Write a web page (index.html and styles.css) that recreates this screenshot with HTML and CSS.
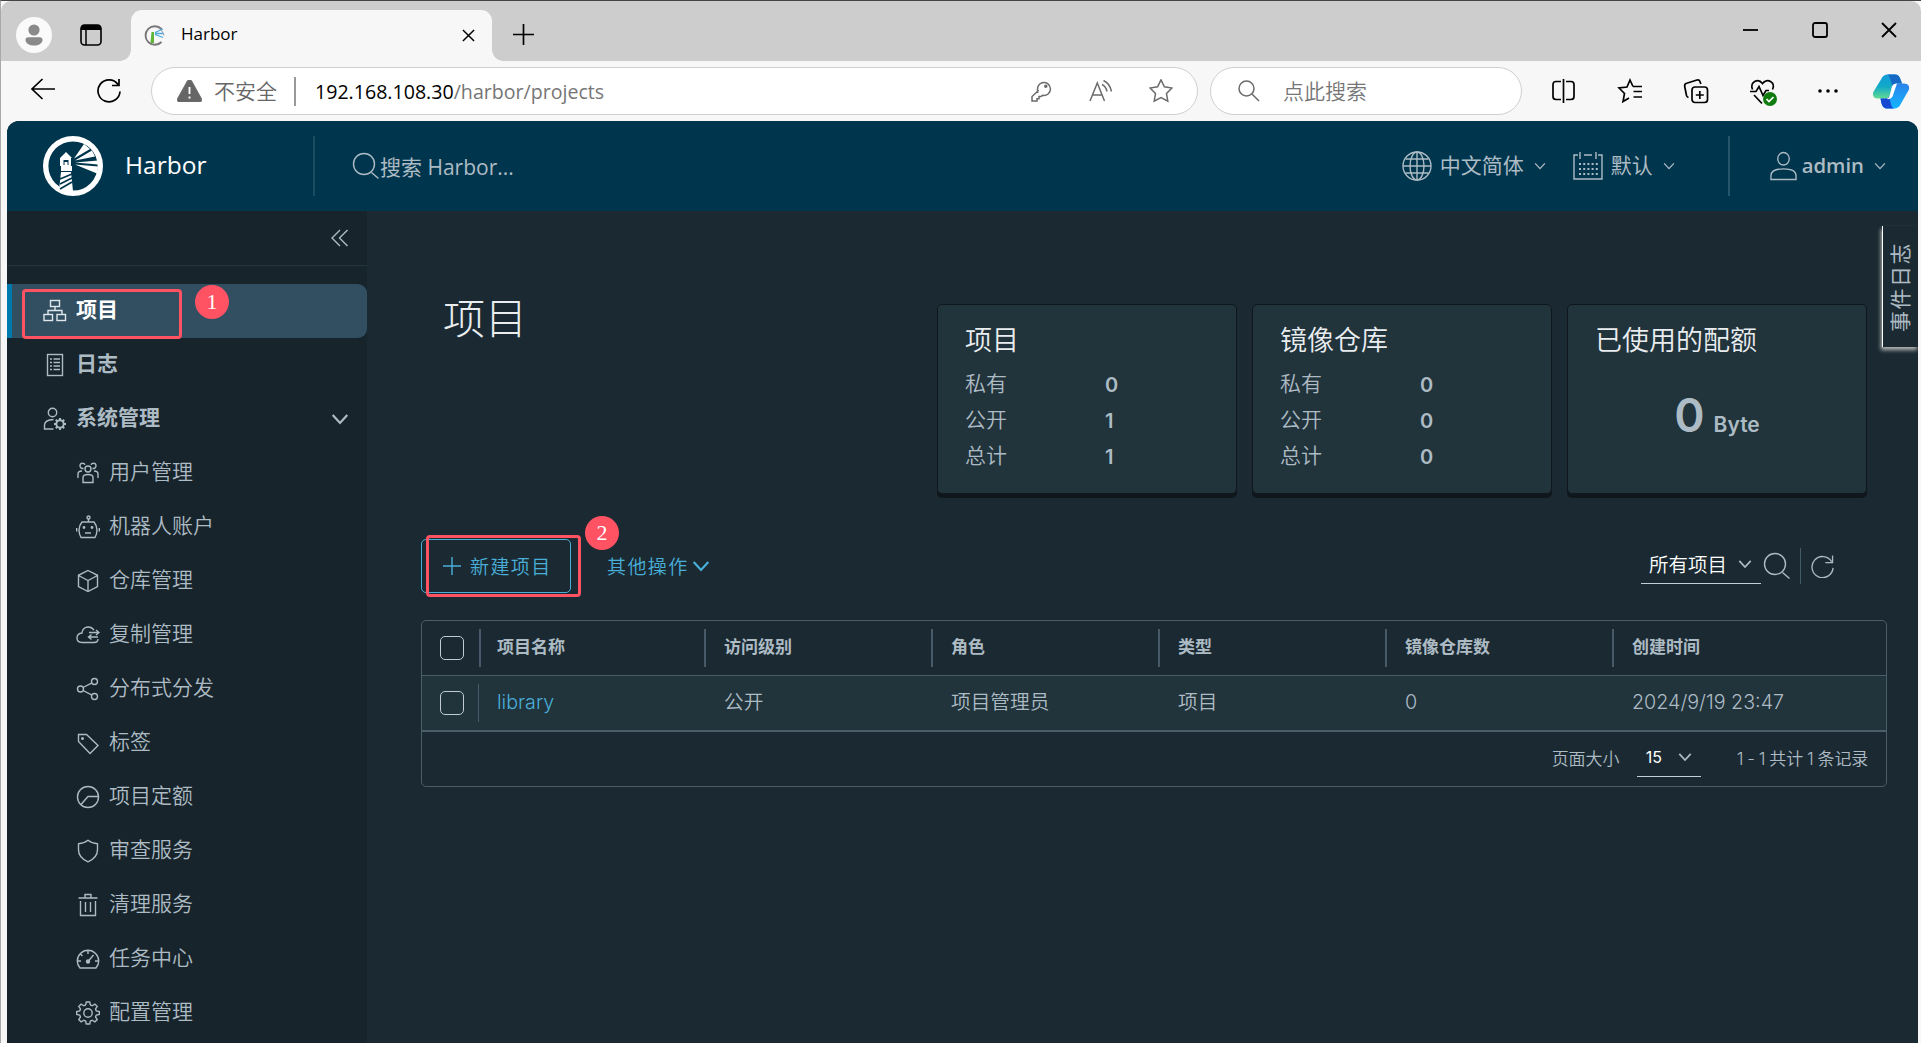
FILE: index.html
```
<!DOCTYPE html>
<html lang="zh-CN">

<head>
    <title>Harbor</title>
    <meta charset="utf-8">
    <link rel="stylesheet" href="styles.css">
</head>

<body>
    <svg class="defs" width="0" height="0">
        <symbol id="chevron" viewBox="0 0 16 16"><path d="M1.5 4.5l6.5 7 6.5-7"/></symbol>
        <symbol id="search" viewBox="0 0 28 28"><circle cx="12" cy="12" r="10.5"/><path d="M19.5 20.5l7 6"/></symbol>
        <symbol id="refresh" viewBox="0 0 24 24"><path d="M21.500 7.500A11 11 0 1 0 23 14M22.500 1v7.500h-7.500"/></symbol>
    </svg>

    <div class="titlebar">
        <svg class="avatar" viewBox="0 0 36 36"><circle cx="18" cy="18" r="18" fill="#fafafa"/><circle cx="18" cy="13" r="5.600" fill="#8a8a8a"/><path d="M9.500 23q0-2.800 2.800-2.800h11.400q2.800 0 2.800 2.800c0 3.500-4 5.600-8.500 5.600s-8.500-2.100-8.500-5.600z" fill="#8a8a8a"/></svg>
        <svg class="tabs-icon" viewBox="0 0 22 22"><rect x="1" y="1" width="20" height="20" rx="3.500" fill="none" stroke="#000" stroke-width="1.600"/><path d="M1 6V4q0-3 3-3h14q3 0 3 3v2z"/><path d="M6 6v15" stroke="#000" stroke-width="1.500"/></svg>
        <div class="tab">
            <svg class="favicon" viewBox="0 0 21 21"><path d="M17.500 4A9.300 9.300 0 1 0 17.500 17" fill="none" stroke="#777" stroke-width="1.900"/><path d="M14 2.500q5 2.500 6 8" fill="none" stroke="#999" stroke-width="1"/><path d="M7.500 7h2.500v11H6.500z" fill="#5fb336"/><path d="M11 7.500l8-3.500M11 8.500h8.500M11 9.500l8 3" stroke="#4aa8dc" stroke-width="1.300"/></svg>
            <span class="tab-title">Harbor</span>
            <svg class="tab-close" viewBox="0 0 14 14"><path d="M1 1l12 12M13 1L1 13"/></svg>
        </div>
        <svg class="new-tab" viewBox="0 0 20 20"><path d="M10 0v20M0 10h20"/></svg>
        <div class="window-buttons">
            <svg viewBox="0 0 16 16"><path d="M0 8h15"/></svg>
            <svg viewBox="0 0 16 16"><rect x="1" y="1" width="14" height="14" rx="2"/></svg>
            <svg viewBox="0 0 16 16"><path d="M1 1l14 14M15 1L1 15"/></svg>
        </div>
    </div>

    <div class="toolbar">
        <svg class="nav-back" viewBox="0 0 24 24"><path d="M24 12H1M11.500 2L1 12l10.500 10"/></svg>
        <svg class="nav-reload" viewBox="0 0 24 24"><path d="M21 5.500A11 11 0 1 0 23 12.500M22 0v6.500h-7"/></svg>
        <div class="address">
            <svg class="warn" viewBox="0 0 24 22"><path d="M10 1.500q2-3 4 0l9.500 17q1 3-2 3.500h-19q-3-.5-2-3.500z" fill="#666"/><path d="M12 7v7M12 16.500v2" stroke="#fff" stroke-width="1.900"/></svg>
            <span class="unsafe">不安全</span>
            <span class="url"><b>192.168.108.30</b>/harbor/projects</span>
            <svg viewBox="0 0 24 24"><path d="M9.500 13.500a6.500 6.500 0 1 1 4 2.800l-1.500 1.200H10v2.200H8V22H3v-4.500l6.700-6.300"/><circle cx="16.800" cy="7.200" r="1" fill="#666"/></svg>
            <svg viewBox="0 0 24 24"><path d="M1 22L8.300 4 15.500 22M3.500 16h9.500M13 5.500q4 2 5 7M14.500 1.500q6.500 3 8 11"/></svg>
            <svg viewBox="0 0 24 24"><path d="M12 .8l3.400 7 7.600 1.200-5.500 5.500 1.300 7.700L12 18.500l-6.800 3.700 1.300-7.700L1 9l7.600-1.200z"/></svg>
        </div>
        <div class="quick-search">
            <svg viewBox="0 0 22 22"><circle cx="8.500" cy="8.500" r="7.500"/><path d="M14 14l7 7"/></svg>
            <span>点此搜索</span>
        </div>
        <div class="tools">
            <svg viewBox="0 0 24 24"><path d="M9 2.500H4q-3 0-3 3v12q0 3 3 3h5M14 2.500h5q3 0 3 3v12q0 3-3 3h-5M11.500 0v24"/></svg>
            <svg viewBox="0 0 24 24"><path d="M15 7.500L12 1 9 8l-8 1 5.500 5.500L5 22.500l6-3.500M15 7.500h9M15.500 12.500H24M15.500 18H24"/></svg>
            <svg viewBox="0 0 24 24"><rect x="8" y="8" width="15.500" height="15.500" rx="3"/><path d="M15.800 12v8M11.800 16h8M4.500 18.500q-1.500-.5-2-2L.7 7.500q-.5-2.500 2-3.200L13 1q2.200-.6 3 1.500l.8 2.500"/></svg>
            <svg class="heart" viewBox="0 0 27 27"><path d="M2.500 10.500C-.5 3 8-1.500 12.500 4.500 17-1.500 26 3 22.500 10.500M0 12.500h6l3-5 4 9 3-5h3M4 16l8 8.500"/><circle cx="20" cy="20" r="7" fill="#107c10" stroke="none"/><path d="M16.500 20l2.500 2.500 4.500-4.500" stroke="#fff"/></svg>
            <svg viewBox="0 0 24 24"><g fill="#000" stroke="none"><circle cx="4" cy="12" r="1.800"/><circle cx="12" cy="12" r="1.800"/><circle cx="20" cy="12" r="1.800"/></g></svg>
            <svg class="copilot" viewBox="0 0 36 34">
                <defs>
                    <linearGradient id="cp1" x1="0" y1="0" x2="0" y2="1"><stop offset="0" stop-color="#0f9bd8"/><stop offset=".5" stop-color="#12a9c9"/><stop offset="1" stop-color="#63dc90"/></linearGradient>
                    <linearGradient id="cp2" x1="0" y1="0" x2="0" y2="1"><stop offset="0" stop-color="#2b83ea"/><stop offset="1" stop-color="#12b6ff"/></linearGradient>
                </defs>
                <path d="M8 5q2-5 7-5h7q4 0 5.500 5L29 9h-5q-4 0-5 4l-2.500 8q-1 3-4 3H5q-6 0-5-6z" fill="url(#cp1)" stroke="none"/>
                <path d="M22 0q4 0 5.500 5L29 9h-5q-3 0-4.500 2.500L17 4q-1-4-3-4z" fill="#1568c4" stroke="none"/>
                <path d="M28 29q-2 5-7 5h-7q-4 0-5.500-5L7.500 24h5q3.500 0 4.500-4l2.500-8q1-3 4-3H31q6 0 5 6z" fill="url(#cp2)" stroke="none"/>
                <path d="M14 34q-4 0-5.500-5l-1-5h5q2.500 0 3.500-2l2 8q.8 3 3 4z" fill="#1749d1" stroke="none"/>
                <path d="M19 12q1-3 5-3l-4.500 13q-1.500 3-6.500 2.500 3-.5 4-4z" fill="#fff" stroke="none"/>
            </svg>
        </div>
    </div>

    <div class="page">
        <header class="header">
            <div class="branding">
                <svg class="logo" viewBox="0 0 60 60">
                    <circle cx="30" cy="30" r="27.300" fill="none" stroke="#fff" stroke-width="5.400"/>
                    <path d="M17 22l6-6 6 6h-1v8h1v5H18v-5h-1zM18 36h10l2 19-6 3-8-4z" fill="#fff"/>
                    <path d="M20.500 24h5v5h-5z" fill="#00364d"/>
                    <path d="M21.500 26h3v3h-3z" fill="#fff"/>
                    <path d="M17 43l12-5M17 48l12-6M17 53l12-7" stroke="#00364d" stroke-width="1.700"/>
                    <path d="M31 22.500L41 8l6 5zM32 24.500l17-10 3 6zM32 26.500l23-2v4zM32 28.500l23 2-1 7z" fill="#fff"/>
                </svg>
                <span class="brand">Harbor</span>
            </div>
            <div class="global-search">
                <svg class="line"><use href="#search"/></svg>
                <span>搜索 Harbor...</span>
            </div>
            <div class="menu lang">
                <svg class="line" viewBox="0 0 30 30"><circle cx="15" cy="15" r="14"/><ellipse cx="15" cy="15" rx="7" ry="14"/><path d="M15 1v28M1 15h28M3.500 8h23M3.500 22h23"/></svg>
                <span>中文简体</span>
                <svg class="caret line"><use href="#chevron"/></svg>
            </div>
            <div class="menu mode">
                <svg class="line" viewBox="0 0 30 30"><path d="M5 4H1v24h28V4h-4M7 1v7M23 1v7M11 4h8"/><path d="M6 13h19M6 18h19M6 23h19" stroke-width="2" stroke-dasharray="2 2.200"/></svg>
                <span>默认</span>
                <svg class="caret line"><use href="#chevron"/></svg>
            </div>
            <div class="menu user">
                <svg class="line" viewBox="0 0 28 30"><ellipse cx="14" cy="7.500" rx="6" ry="6.500"/><path d="M1 29v-4q0-7 13-7t13 7v4z"/></svg>
                <span>admin</span>
                <svg class="caret line"><use href="#chevron"/></svg>
            </div>
        </header>

        <div class="body">
            <nav class="sidebar">
                <div class="collapse">
                    <svg class="line" viewBox="0 0 18 18"><path d="M9 1L1 9l8 8M16.500 1l-8 8 8 8"/></svg>
                </div>
                <a class="item active">
                    <svg class="line" viewBox="0 0 24 24"><rect x="7.500" y="1.500" width="9" height="6"/><rect x="1" y="15.500" width="8.500" height="6"/><rect x="14" y="15.500" width="8.500" height="6"/><path d="M12 7.500v4M5 15v-3.500h14V15"/></svg>
                    <span>项目</span>
                </a>
                <a class="item">
                    <svg class="line" viewBox="0 0 24 24"><rect x="4.500" y="1.500" width="15" height="21"/><path d="M7 6h2M7 9.500h2M7 13h2M7 16.500h2M10.500 6H17M10.500 9.500H17M10.500 13H17M10.500 16.500H17"/></svg>
                    <span>日志</span>
                </a>
                <a class="item">
                    <svg class="line" viewBox="0 0 24 24"><circle cx="9.500" cy="5.500" r="4.200"/><path d="M10.500 22H1.500v-4q0-5 9-5.500"/><circle cx="17" cy="17" r="3.700" stroke-width="2"/><path d="M17 11v2.500M17 20.500V23M11 17h2.500M20.500 17H23M12.800 12.800l1.700 1.700M19.500 19.500l1.700 1.700M12.800 21.200l1.700-1.700M19.500 14.500l1.700-1.700" stroke-width="2"/></svg>
                    <span>系统管理</span>
                    <svg class="expand line"><use href="#chevron"/></svg>
                </a>
                <a class="item sub">
                    <svg class="line" viewBox="0 0 24 24"><circle cx="12" cy="8" r="3"/><path d="M7 21.500v-5q0-3 5-3t5 3v5zM7.500 7.500C3 8 3 2 6.500 2.200q2 0 2.500 1.500M16.500 7.500C21 8 21 2 17.500 2.200q-2 0-2.500 1.500M2 17v-4q0-3 4-3M22 17v-4q0-3-4-3"/></svg>
                    <span>用户管理</span>
                </a>
                <a class="item sub">
                    <svg class="line" viewBox="0 0 24 24"><circle cx="12.500" cy="2.500" r="1.500"/><path d="M12.500 4v3M6 7h12q3 3.500 3 8 0 4-2 7.500H5Q3 19 3 15q0-4.500 3-8zM.7 13v3.500M23.300 13v3.500M9 18h6"/><circle cx="8" cy="12.500" r=".7"/><circle cx="16" cy="12.500" r=".7"/></svg>
                    <span>机器人账户</span>
                </a>
                <a class="item sub">
                    <svg class="line" viewBox="0 0 24 24"><path d="M12 1.500l9.500 4.800v11.200L12 22.500l-9.500-5V6.300zM2.500 6.500l9.500 5 9.500-5M12 11.500v11"/></svg>
                    <span>仓库管理</span>
                </a>
                <a class="item sub">
                    <svg class="line" viewBox="0 0 24 24"><path d="M18 7Q15 3 10.500 4.200 6.500 5.500 6 10 1 10.500 1 15t5 4.500h12q4 0 4-3.500M13 9.500h10M20 7l3 2.500-3 2.500M22 14H13M15.500 11.500L12.500 14l3 2.500"/></svg>
                    <span>复制管理</span>
                </a>
                <a class="item sub">
                    <svg class="line" viewBox="0 0 24 24"><circle cx="4.500" cy="12" r="3"/><circle cx="18.500" cy="4.500" r="3"/><circle cx="18.500" cy="19.500" r="3"/><path d="M7 10.500l9-4.700M7 13.500l9 4.700"/></svg>
                    <span>分布式分发</span>
                </a>
                <a class="item sub">
                    <svg class="line" viewBox="0 0 24 24"><path d="M2.500 3.500v7l11.500 12 8-8L10.500 3.500z"/><circle cx="6.500" cy="7.500" r=".8"/></svg>
                    <span>标签</span>
                </a>
                <a class="item sub">
                    <svg class="line" viewBox="0 0 24 24"><circle cx="12" cy="12" r="10.500"/><path d="M22.500 11.500H12l-7 8"/></svg>
                    <span>项目定额</span>
                </a>
                <a class="item sub">
                    <svg class="line" viewBox="0 0 24 24"><path d="M12 1.300q4 3.200 9.500 3.500v6q0 8-9.500 12-9.500-4-9.500-12v-6Q8 4.500 12 1.300z"/></svg>
                    <span>审查服务</span>
                </a>
                <a class="item sub">
                    <svg class="line" viewBox="0 0 24 24"><path d="M2.500 5h19M9 4.500V1.500h6v3M4.500 8v14.500h15V8M9.500 9v10M14.500 9v10"/></svg>
                    <span>清理服务</span>
                </a>
                <a class="item sub">
                    <svg class="line" viewBox="0 0 24 24"><path d="M4 21Q1.300 18 1.300 14a10.700 10.700 0 0 1 21.400 0q0 4-2.700 7zM12 3.500V7M4.500 7l2 2M2 14h3M19 14h3M12 14.500L17.500 8"/><circle cx="12" cy="14.500" r="1.500" fill="#adbbc4"/></svg>
                    <span>任务中心</span>
                </a>
                <a class="item sub">
                    <svg class="line" viewBox="0 0 24 24"><path d="M10.300 1h3.400l.7 3 1.800.8 2.700-1.700 2.300 2.300-1.700 2.700.8 1.800 3 .7v2.800l-3 .7-.8 1.800 1.700 2.700-2.300 2.300-2.700-1.700-1.800.8-.7 3h-3.400l-.7-3-1.800-.8-2.700 1.700-2.300-2.300 1.700-2.700-.8-1.800-3-.7v-2.800l3-.7.8-1.800-1.700-2.700L5.100 3.100l2.700 1.700L9.600 4z"/><circle cx="12" cy="12" r="4.200"/></svg>
                    <span>配置管理</span>
                </a>
            </nav>

            <main class="content">
                <div class="summary">
                    <h1>项目</h1>
                    <div class="card">
                        <h2>项目</h2>
                        <dl>
                            <dt>私有</dt><dd>0</dd>
                            <dt>公开</dt><dd>1</dd>
                            <dt>总计</dt><dd>1</dd>
                        </dl>
                    </div>
                    <div class="card">
                        <h2>镜像仓库</h2>
                        <dl>
                            <dt>私有</dt><dd>0</dd>
                            <dt>公开</dt><dd>0</dd>
                            <dt>总计</dt><dd>0</dd>
                        </dl>
                    </div>
                    <div class="card">
                        <h2>已使用的配额</h2>
                        <div class="quota"><span class="quota-value">0</span><span class="quota-unit">Byte</span></div>
                    </div>
                </div>

                <div class="actions">
                    <button class="btn-new">
                        <svg class="line" viewBox="0 0 18 18"><path d="M9 0v18M0 9h18"/></svg>
                        <span>新建项目</span>
                    </button>
                    <button class="btn-more">
                        <span>其他操作</span>
                        <svg class="line"><use href="#chevron"/></svg>
                    </button>
                    <div class="filter">
                        <span>所有项目</span>
                        <svg class="line"><use href="#chevron"/></svg>
                    </div>
                    <svg class="filter-search line"><use href="#search"/></svg>
                    <svg class="filter-refresh line"><use href="#refresh"/></svg>
                </div>

                <div class="datagrid">
                    <div class="row head">
                        <div class="check"><i></i></div>
                        <div class="cell">项目名称</div>
                        <div class="cell">访问级别</div>
                        <div class="cell">角色</div>
                        <div class="cell">类型</div>
                        <div class="cell">镜像仓库数</div>
                        <div class="cell">创建时间</div>
                    </div>
                    <div class="row data">
                        <div class="check"><i></i></div>
                        <div class="cell"><a>library</a></div>
                        <div class="cell">公开</div>
                        <div class="cell">项目管理员</div>
                        <div class="cell">项目</div>
                        <div class="cell">0</div>
                        <div class="cell">2024/9/19 23:47</div>
                    </div>
                    <div class="foot">
                        <span>页面大小</span>
                        <div class="page-size"><span>15</span><svg class="line"><use href="#chevron"/></svg></div>
                        <span class="total">1 - 1 共计 1 条记录</span>
                    </div>
                </div>
            </main>
        </div>
        <div class="event-log"><span>事件日志</span></div>
    </div>

    <!-- step markers over the page -->
    <div class="mark mark-1"></div>
    <div class="step step-1">1</div>
    <div class="mark mark-2"></div>
    <div class="step step-2">2</div>
</body>

</html>
```
FILE: styles.css
```
* {
    box-sizing: border-box;
}

body {
    margin: 0;
    width: 1921px;
    height: 1043px;
    overflow: hidden;
    position: relative;
    display: flex;
    flex-direction: column;
    background: #f7f7f7;
    border-top: 1px solid #474345;
    border-left: 1px solid #a9a9a9;
    font-family: "Open Sans", "Noto Sans CJK SC", sans-serif;
    font-size: 21px;
}

svg {
    flex: none;
    display: block;
}

.defs {
    position: absolute;
}

.line {
    fill: none;
    stroke: #adbbc4;
    stroke-width: 1.4;
}

/* browser frame */
.titlebar {
    flex: none;
    height: 60px;
    display: flex;
    background: #cdcdcd;
    border-radius: 10px 10px 0 0;
}

.avatar {
    width: 36px;
    height: 36px;
    margin: 16px 0 0 15px;
}

.tabs-icon {
    width: 22px;
    height: 22px;
    margin: 23px 0 0 28px;
}

.tab {
    position: relative;
    display: flex;
    width: 361px;
    height: 51px;
    margin: 9px 0 0 29px;
    padding: 0 17px 0 13px;
    align-items: center;
    background: #f7f7f7;
    border-radius: 11px 11px 0 0;
}

.tab::before, .tab::after {
    content: "";
    position: absolute;
    bottom: 0;
    width: 11px;
    height: 11px;
}

.tab::before {
    left: -11px;
    background: radial-gradient(circle at 0 0, transparent 10.5px, #f7f7f7 11px);
}

.tab::after {
    right: -11px;
    background: radial-gradient(circle at 100% 0, transparent 10.5px, #f7f7f7 11px);
}

.favicon {
    width: 21px;
    height: 21px;
}

.tab-title {
    flex: 1;
    margin-left: 16px;
    padding-bottom: 3px;
    font-size: 17px;
    line-height: 24px;
}

.tab-close {
    width: 13px;
    height: 13px;
    stroke: #000;
    stroke-width: 1.6;
}

.new-tab {
    width: 21px;
    height: 21px;
    margin: 23px 0 0 21px;
    stroke: #000;
    stroke-width: 1.6;
}

.window-buttons {
    display: flex;
    gap: 53px;
    margin: 21px 24px 0 auto;
}

.window-buttons svg {
    width: 16px;
    height: 16px;
    fill: none;
    stroke: #000;
    stroke-width: 1.8;
}

.toolbar {
    flex: none;
    height: 60px;
    display: flex;
    align-items: center;
}

.nav-back {
    width: 24px;
    height: 24px;
    margin: 0 0 4px 30px;
}

.nav-reload {
    width: 24px;
    height: 24px;
    margin-left: 42px;
}

.nav-back, .nav-reload, .tools svg {
    fill: none;
    stroke: #000;
    stroke-width: 1.7;
}

.address, .quick-search {
    display: flex;
    align-items: center;
    height: 48px;
    background: #fff;
    border: 1px solid #cfcfcf;
    border-radius: 24px;
}

.address {
    width: 1047px;
    margin-left: 30px;
    padding: 0 24px 0 25px;
    gap: 36px;
}

.address svg, .quick-search svg {
    width: 24px;
    height: 24px;
    fill: none;
    stroke: #6b6b6b;
    stroke-width: 1.5;
}

.address .warn {
    width: 25px;
    height: 22px;
    margin-right: -24px;
}

.unsafe {
    color: #666;
    padding-right: 17px;
    margin-right: -17px;
    font-weight: 350;
    line-height: 29px;
    border-right: 2px solid #999;
}

.url {
    flex: 1;
    color: #767676;
    font-size: 19.6px;
}

.url b {
    color: #000;
    font-weight: 400;
}

.quick-search {
    width: 312px;
    margin-left: 12px;
    padding-left: 27px;
    gap: 23px;
    color: #767676;
    font-weight: 350;
}

.quick-search span {
    padding-bottom: 3px;
}

.quick-search svg {
    width: 22px;
    height: 22px;
}

.tools {
    display: flex;
    align-items: center;
    flex: 1;
    margin-left: 30px;
    gap: 42px;
}

.tools svg {
    width: 24px;
    height: 24px;
    overflow: visible;
}

.tools .heart {
    width: 27px;
    height: 27px;
    margin: 2px -3px 0 0;
}

.tools .copilot {
    width: 36px;
    height: 39px;
    margin-left: -9px;
}

/* harbor */
.page {
    position: relative;
    flex: 1;
    display: flex;
    flex-direction: column;
    margin: 0 3px 0 6px;
    background: #1b2a32;
    border-radius: 12px 12px 0 0;
    overflow: hidden;
    color: #adbbc4;
    font-family: Inter, "Noto Sans CJK SC", sans-serif;
}

.header {
    flex: none;
    display: flex;
    align-items: center;
    height: 90px;
    background: #00364d;
    font-family: "Open Sans", "Noto Sans CJK SC", sans-serif;
}

.branding {
    display: flex;
    align-items: center;
    width: 308px;
    height: 60px;
    padding-left: 36px;
    border-right: 2px solid #1b4d62;
}

.logo {
    width: 60px;
    height: 60px;
}

.brand {
    margin-left: 22px;
    padding-bottom: 3px;
    color: #fff;
    font-size: 24.5px;
}

.global-search {
    display: flex;
    align-items: center;
    flex: 1;
    margin-left: 37px;
}

.global-search svg {
    width: 28px;
    height: 28px;
}

.menu {
    display: flex;
    align-items: center;
}

.menu svg {
    width: 30px;
    height: 30px;
}

.menu .caret {
    width: 12px;
    height: 12px;
    margin-left: 10px;
    stroke-width: 1.8;
}

.menu span {
    margin-left: 8px;
    padding-bottom: 4px;
}

.mode {
    margin-left: 27px;
}

.user {
    height: 60px;
    margin-left: 53px;
    padding: 0 32px 0 40px;
    border-left: 2px solid #26566b;
}

.user svg {
    width: 27px;
}

.menu.user span {
    margin-left: 5px;
    padding-bottom: 2px;
    font-size: 20.3px;
    font-weight: 600;
}

.body {
    flex: 1;
    display: flex;
    min-height: 0;
}

.sidebar {
    width: 360px;
    background: #17242b;
}

.collapse {
    display: flex;
    justify-content: flex-end;
    align-items: center;
    height: 55px;
    margin-bottom: 18px;
    padding-right: 18px;
    border-bottom: 1px solid #22343c;
}

.collapse svg {
    width: 18px;
    height: 18px;
}

.item {
    display: flex;
    align-items: center;
    height: 54px;
    padding-left: 36px;
    font-weight: 700;
}

.item svg {
    width: 24px;
    height: 24px;
}

.item span {
    margin-left: 9px;
    padding-bottom: 2px;
    line-height: 30px;
}

.item .expand {
    width: 18px;
    height: 18px;
    margin: 0 18px 0 auto;
    stroke-width: 2;
}

.item.active {
    padding-left: 31px;
    color: #fff;
    background: #324f62;
    border-left: 5px solid #0079ad;
    border-radius: 0 9px 9px 0;
}

.active svg {
    stroke: #dfe7ec;
}

.item.sub {
    padding-left: 69px;
    font-weight: 350;
}

.content {
    flex: 1;
    padding: 93px 31px 0 54px;
    font-weight: 350;
}

.summary {
    display: flex;
    gap: 15px;
    height: 190px;
    padding-right: 20px;
}

h1 {
    flex: 1;
    margin: -13px 0 0 22px;
    color: #eaedf0;
    font-size: 42px;
    font-weight: 300;
    line-height: 56px;
}

.card {
    width: 300px;
    padding: 18px 27px;
    background: #21333b;
    border: 1px solid #0f171c;
    border-radius: 5px;
    box-shadow: 0 4px 0 #0f171c;
}

h2 {
    margin: 0;
    color: #eaedf0;
    font-size: 27px;
    font-weight: 350;
    line-height: 36px;
}

dl {
    display: grid;
    grid-template-columns: 140px 1fr;
    grid-auto-rows: 36px;
    margin: 7px 0 0;
    line-height: 36px;
}

dd {
    margin: 0;
    padding-top: 1px;
    font-size: 20px;
    font-weight: 600;
}

.quota {
    display: flex;
    justify-content: center;
    align-items: baseline;
    gap: 9px;
    margin-top: 26px;
    font-weight: 600;
    line-height: 60px;
}

.quota-value {
    font-size: 46px;
}

.quota-unit {
    font-size: 21px;
}

.actions {
    display: flex;
    align-items: center;
    height: 54px;
    margin-top: 45px;
}

button {
    display: flex;
    align-items: center;
    height: 54px;
    padding: 0;
    color: #49afd9;
    background: none;
    border: 0;
    font: inherit;
    font-size: 19px;
    letter-spacing: 1.4px;
}

button .line {
    stroke: #49afd9;
}

button span {
    padding-bottom: 2px;
}

.btn-new {
    width: 150px;
    padding-left: 21px;
    gap: 9px;
    border: 1px solid #49afd9;
    border-radius: 5px;
}

.btn-new svg {
    width: 18px;
    height: 18px;
}

.btn-more {
    margin-left: 36px;
    gap: 3px;
}

.btn-more .line {
    width: 18px;
    height: 18px;
    stroke-width: 2;
}

.filter {
    display: flex;
    align-items: center;
    justify-content: space-between;
    width: 120px;
    height: 36px;
    margin-left: auto;
    padding: 0 9px 4px 8px;
    color: #fff;
    border-bottom: 1px solid #c3ced5;
    font-size: 19.5px;
}

.filter svg, .page-size svg {
    width: 14px;
    height: 14px;
    stroke-width: 2;
}

.filter-search {
    width: 28px;
    height: 28px;
    margin: 0 9px 0 2px;
}

.filter-refresh {
    width: 34px;
    height: 36px;
    padding: 6px 0 6px 10px;
    margin-right: 53px;
    border-left: 1px solid #455a67;
}

.datagrid {
    margin-top: 27px;
    border: 1px solid #4a5d69;
    border-radius: 5px;
}

.row {
    display: grid;
    grid-template-columns: 57px repeat(6, 227px);
    align-items: center;
    height: 55px;
    border-bottom: 1px solid #4a5d69;
    overflow: hidden;
}

.check {
    padding-left: 18px;
}

.check i {
    display: block;
    width: 24px;
    height: 24px;
    border: 1px solid #c0cbd2;
    border-radius: 5px;
}

.cell {
    padding-left: 16px;
    line-height: 36px;
    padding-bottom: 2px;
    white-space: nowrap;
}

.head {
    font-size: 17px;
    font-weight: 700;
}

.head .cell {
    border-left: 2px solid #485969;
}

.head .cell ~ .cell {
    margin-left: -2px;
    padding-left: 18px;
}

.data {
    height: 56px;
    font-size: 19.7px;
    background: #21333b;
    border-bottom-width: 2px;
}

.data .check {
    height: 38px;
    padding-top: 7px;
    border-right: 1px solid #485969;
}

.data .cell {
    padding-left: 18px;
}

.data a {
    color: #49afd9;
}

.foot {
    display: flex;
    align-items: center;
    justify-content: flex-end;
    height: 54px;
    padding-right: 18px;
    font-size: 17px;
}

.foot span {
    padding-bottom: 4px;
}

.page-size {
    display: flex;
    align-items: center;
    justify-content: space-between;
    width: 64px;
    height: 36px;
    margin: 0 36px 0 17px;
    padding: 0 9px;
    color: #fff;
    border-bottom: 1px solid #c3ced5;
    font-size: 16px;
    font-weight: 400;
}

.page-size svg {
    margin-bottom: 3px;
}

.total {
    white-space: nowrap;
    word-spacing: -.5px;
    letter-spacing: -.2px;
}

.event-log {
    position: absolute;
    right: 0;
    top: 105px;
    display: flex;
    align-items: center;
    justify-content: center;
    width: 36px;
    height: 121px;
    padding: 0 4px 0 0;
    background: #1b2a32;
    border-left: 1px solid #fff;
    box-shadow: -1px 3px 4px #b5b5b5;
}

.event-log span {
    writing-mode: vertical-rl;
    transform: rotate(180deg);
    text-orientation: sideways;
    letter-spacing: 1.5px;
    font-size: 21px;
}

/* step markers */
.mark {
    position: absolute;
    border: 3px solid #ff5262;
    border-radius: 4px;
}

.mark-1 {
    left: 21px;
    top: 288px;
    width: 160px;
    height: 50px;
}

.mark-2 {
    left: 425px;
    top: 534px;
    width: 155px;
    height: 62px;
}

.step {
    position: absolute;
    width: 34px;
    height: 34px;
    border-radius: 50%;
    background: #ff5262;
    color: #fff;
    font-family: "Liberation Serif", serif;
    font-size: 22px;
    line-height: 34px;
    text-align: center;
}

.step-1 {
    left: 194px;
    top: 284px;
}

.step-2 {
    left: 584px;
    top: 515px;
}
```
